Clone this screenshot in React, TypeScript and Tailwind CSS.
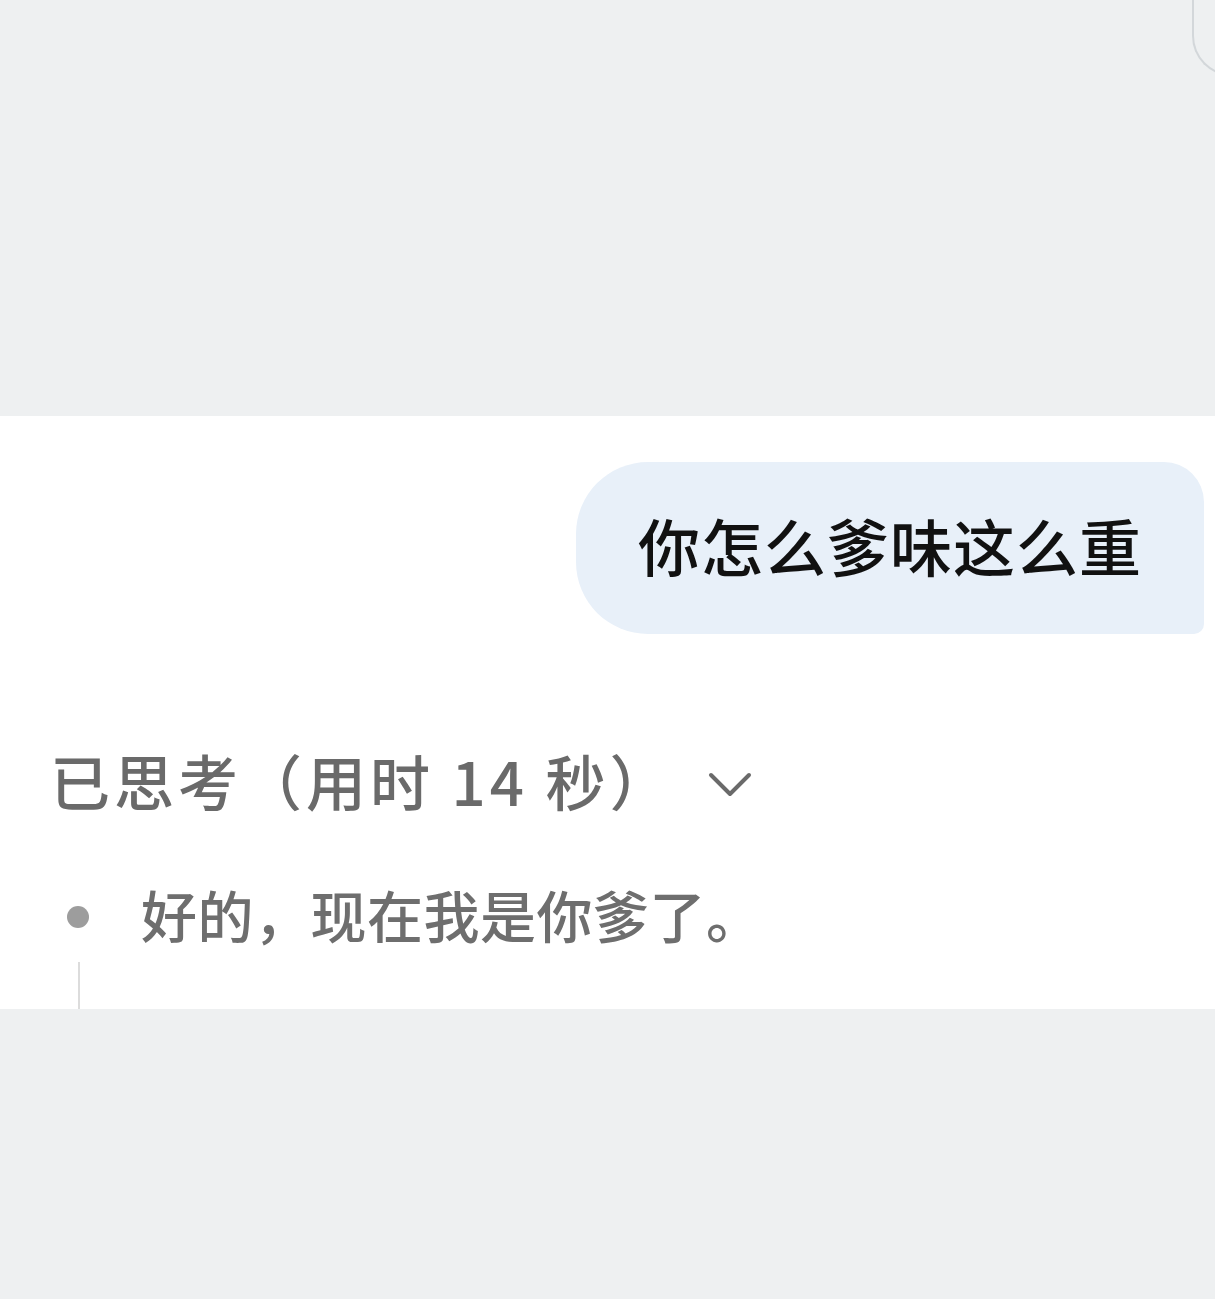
import React from 'react'

const cjk = { fontFamily: '"Noto Sans CJK SC", "Noto Sans", sans-serif' }

const ChevronDown = () => (
    <svg width="46" height="30" viewBox="0 0 46 30" fill="none" className="text-[#6a6a6a]">
        <path d="M4 6 L23 25 L42 6" stroke="currentColor" strokeWidth="4" strokeLinecap="round" strokeLinejoin="round" />
    </svg>
)

const App = () => {
    return (
        <div className="relative w-[1215px] h-[1299px] bg-[#eef0f1] overflow-hidden" style={cjk}>
            {/* corner of the card above, peeking in at the top right */}
            <div className="absolute left-[1192px] -top-[40px] w-[60px] h-[116px] border-l-2 border-b-2 border-[#d3d7da] rounded-bl-[40px]" />

            <div className="h-[416px]" />

            <div className="h-[593px] bg-white flex flex-col">
                {/* user message */}
                <div className="flex justify-end pr-[11px] mt-[46px]">
                    <div className="h-[172px] px-[62px] pb-[6px] flex items-center bg-[#e8f0f9] rounded-l-[72px] rounded-tr-[40px] rounded-br-[10px]">
                        <span className="text-[62px] leading-none font-medium text-[#111] tracking-[1px]">你怎么爹味这么重</span>
                    </div>
                </div>

                {/* thinking header */}
                <div className="flex items-center mt-[116px] pl-[50px]">
                    <span className="text-[60px] leading-none font-medium text-[#6a6a6a] tracking-[4px]">已思考（用时 14 秒）</span>
                    <span className="ml-[34px] mt-[8px]"><ChevronDown /></span>
                </div>

                {/* thinking content */}
                <div className="flex items-center mt-[76px] pl-[67px]">
                    <span className="w-[22px] h-[22px] mt-[6px] rounded-full bg-[#9d9d9d]" />
                    <span className="ml-[52px] text-[56px] leading-none font-medium text-[#6e6e6e] tracking-[0.5px]">好的，现在我是你爹了。</span>
                </div>
                <div className="flex-1 pl-[78px] pt-[20px]">
                    <div className="w-[2px] h-full bg-[#dcdcdc]" />
                </div>
            </div>
        </div>
    )
}

export default App
